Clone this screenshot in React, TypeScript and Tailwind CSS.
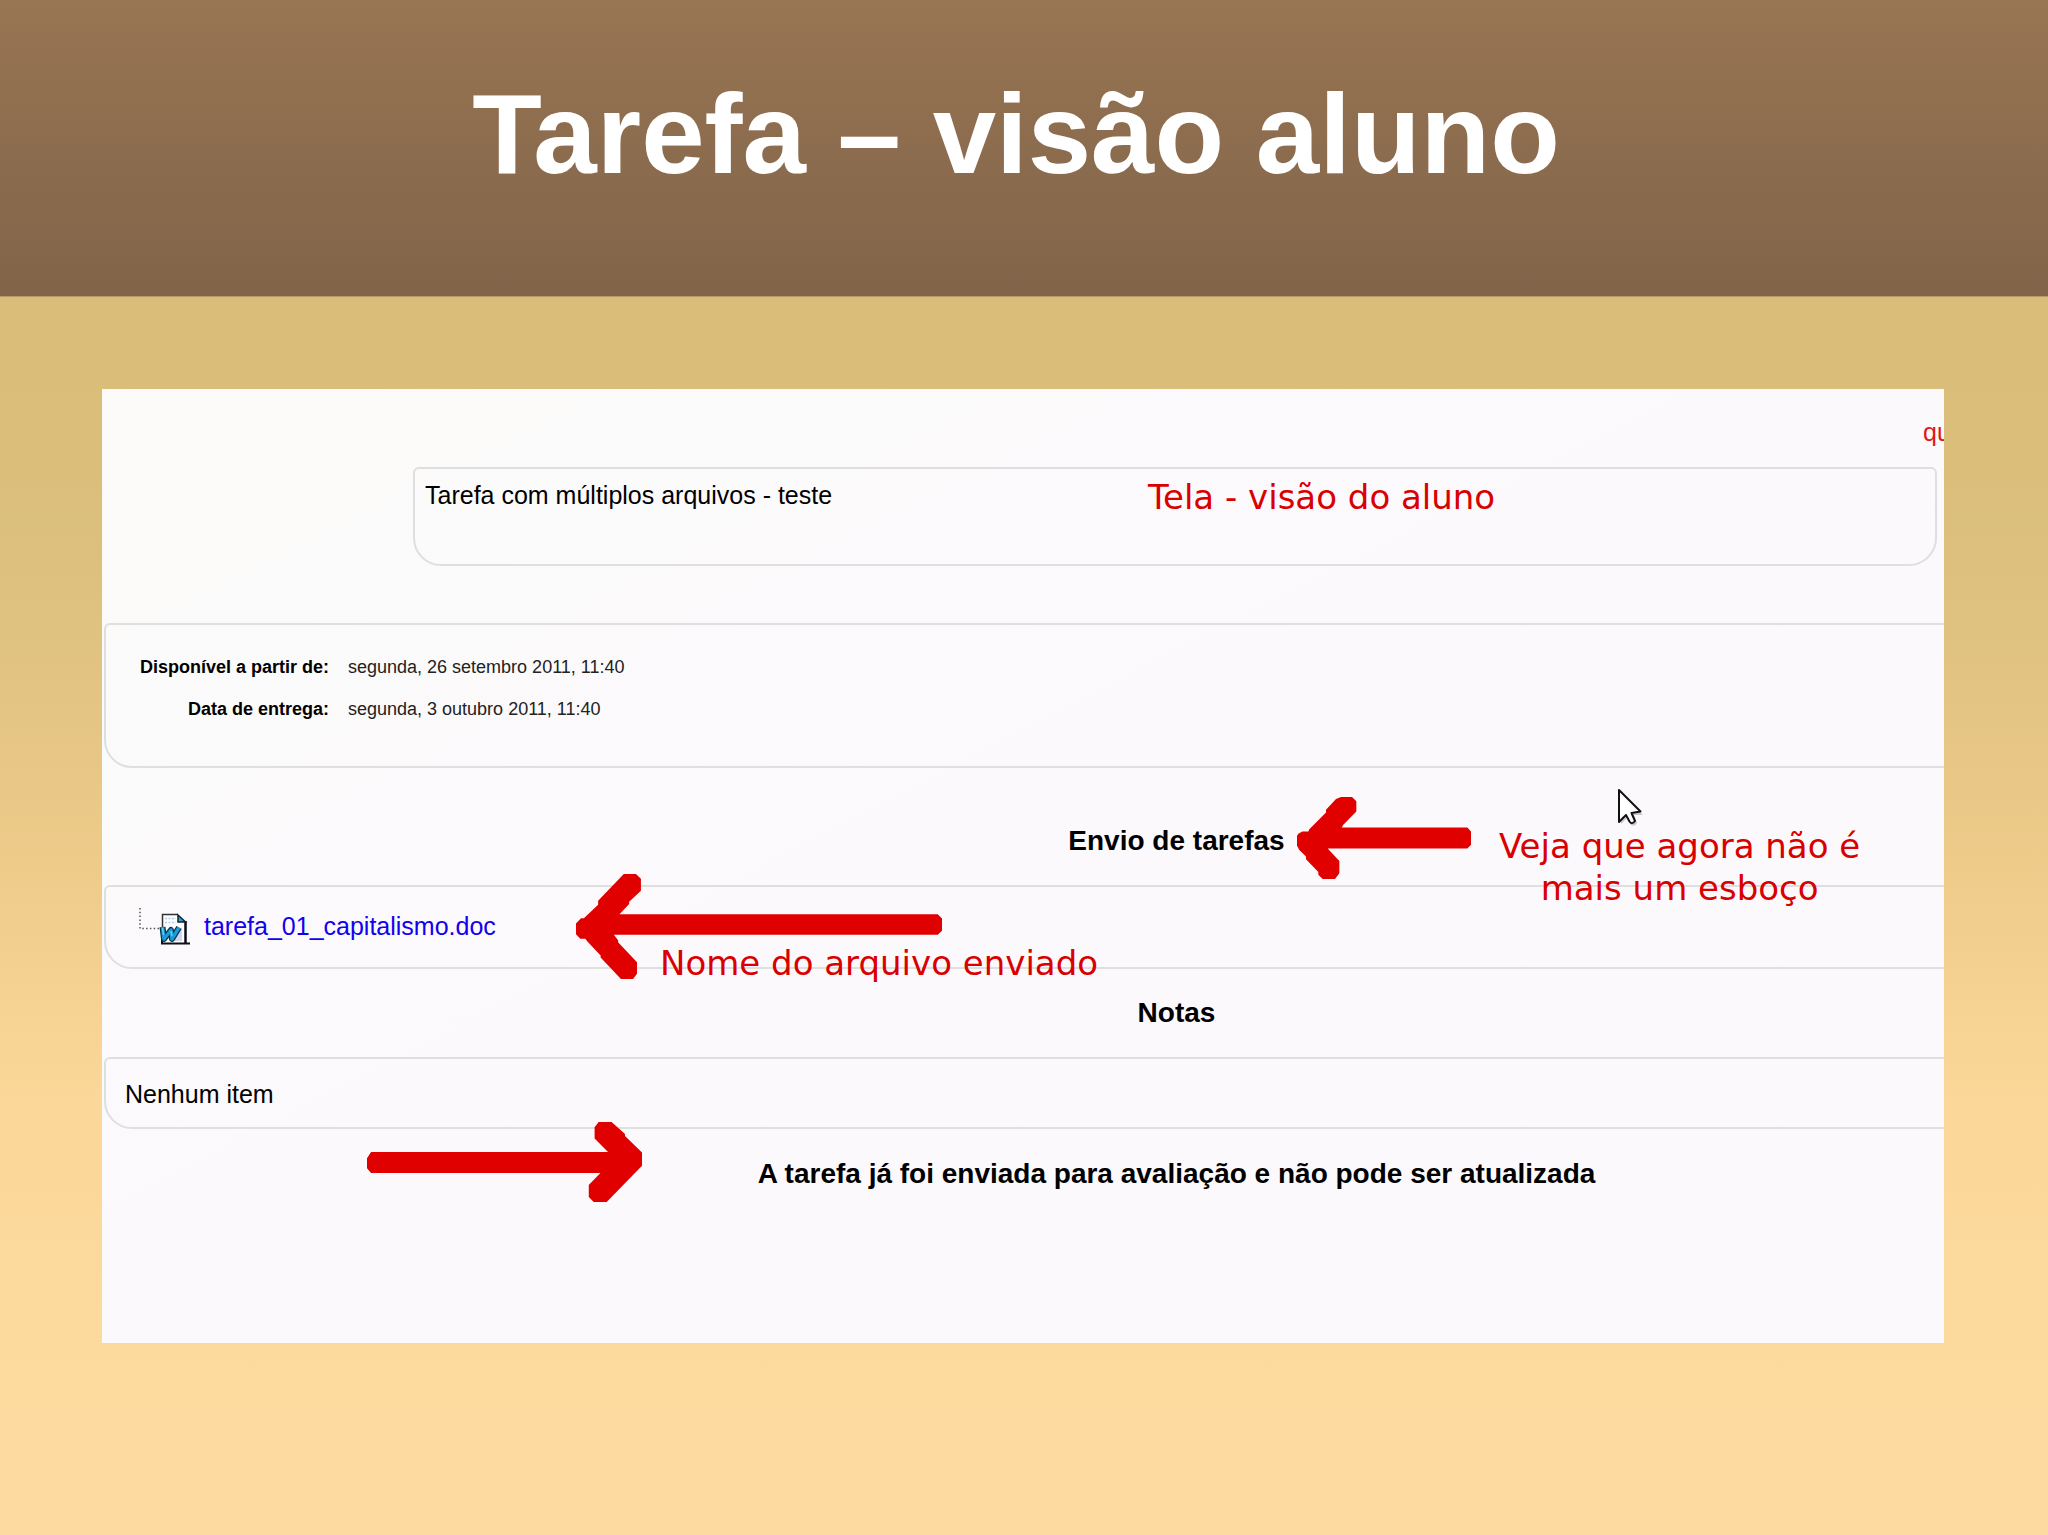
import type { ReactNode } from "react";

function Annotation({ className, children }: { className: string; children: ReactNode }) {
  return (
    <p
      className={`absolute whitespace-nowrap text-center font-['DejaVu_Sans',sans-serif] text-[34px] leading-[42px] text-[#d90000] ${className}`}
    >
      {children}
    </p>
  );
}

function Heading({ children }: { children: ReactNode }) {
  return <h2 className="text-center text-[28px] font-bold leading-[36px]">{children}</h2>;
}

function Box({ className, children }: { className: string; children: ReactNode }) {
  return (
    <section
      className={`rounded-t-md rounded-b-[28px] border-2 border-[#dfdfdf] ${className}`}
    >
      {children}
    </section>
  );
}

function WordIcon() {
  return (
    <svg className="h-[40px] w-[54px] shrink-0" viewBox="0 0 54 40" fill="none" aria-hidden="true">
      <path d="M2 1V21.500H22" stroke="#555" strokeWidth="1.5" strokeDasharray="1.5 2.3" />
      <path d="M24 7H41L47 14V36H24Z" fill="#fdfdff" />
      <path d="M24.500 20V7.500H40" stroke="#333" strokeWidth="1.5" />
      <path d="M24 30V36.500H52" stroke="#111" strokeWidth="2" />
      <path d="M47.500 14V36" stroke="#0b0b18" strokeWidth="2.500" />
      <path d="M40 8L47.500 15H40Z" fill="#2fa7c4" stroke="#123" strokeWidth="1.500" />
      <path d="M27 11.500H38M27 15.500H38" stroke="#b4cdea" strokeWidth="1.500" strokeDasharray="2 1.500" />
      <path d="M34 34L44 20V34Z" fill="#d5d3ef" />
      <path d="M24.500 20L26 32L33 23L34 32L41 20.500" stroke="#062f4a" strokeWidth="6" strokeLinejoin="round" />
      <path d="M24.500 20L26 32L33 23L34 32L41 20.500" stroke="#1b9bd4" strokeWidth="3.500" strokeLinejoin="round" />
      <path d="M24.500 21L25.500 28M33 24L34 29" stroke="#5fd0f4" strokeWidth="1.500" />
    </svg>
  );
}

function Cursor() {
  return (
    <svg
      className="absolute left-[1515px] top-[398px] h-[40px] w-[28px]"
      viewBox="0 0 28 40"
      aria-hidden="true"
    >
      <path d="M4 5V37L10 31L13 37Q17 41 20 36L17 28H26Z" fill="#999" opacity="0.5" />
      <path
        d="M2 3V35L9 28L12.500 34.500Q15 38 18 34L14.500 26L23.500 24.500Z"
        fill="#fff"
        stroke="#111"
        strokeWidth="2"
        strokeLinejoin="round"
      />
    </svg>
  );
}

export default function App() {
  return (
    <div className="flex min-h-screen flex-col bg-[#fddaa0] font-['Liberation_Sans',Arial,sans-serif] text-black">
      <header className="border-b border-[#b89868] bg-gradient-to-b from-[#987553] to-[#816449] pb-[98px] pr-4 pt-[70px]">
        <h1 className="text-center text-[114px] font-bold leading-[128px] text-white">
          Tarefa – visão aluno
        </h1>
      </header>

      <main className="grow bg-[linear-gradient(to_bottom,#d9bd78_0%,#dabe7a_14%,#dfc180_26%,#eecb89_46%,#fbd899_65%,#fddaa0_100%)] pb-48 pl-[102px] pr-[104px] pt-[92px]">
        <div className="relative overflow-hidden bg-gradient-to-br from-[#fcfbf9] via-[#fbf9fc] via-45% to-[#fbf9fc] pb-[151px] pt-[27px] text-[25px] leading-[32px]">
          <div className="flex justify-end text-[#e01818]">
            <p className="w-[21px] overflow-hidden">qu</p>
          </div>

          <div className="ml-[2px] w-[calc(100%+303px)]">
            <Box className="ml-[309px] mr-[312px] mt-[19px] pb-[53px] pl-[10px] pt-[10px]">
              <p>Tarefa com múltiplos arquivos - teste</p>
            </Box>

            <Box className="mb-[55px] mt-[57px] pb-9 pt-[21px]">
              <table className="text-[18px] leading-[42px]">
                <tbody>
                  <tr>
                    <th scope="row" className="w-[223px] p-0 text-right font-bold">
                      Disponível a partir de:
                    </th>
                    <td className="py-0 pl-[19px] text-[#222]">segunda, 26 setembro 2011, 11:40</td>
                  </tr>
                  <tr>
                    <th scope="row" className="w-[223px] p-0 text-right font-bold">
                      Data de entrega:
                    </th>
                    <td className="py-0 pl-[19px] text-[#222]">segunda, 3 outubro 2011, 11:40</td>
                  </tr>
                </tbody>
              </table>
            </Box>

            <Heading>Envio de tarefas</Heading>
            <Box className="my-[26px] flex h-[84px] items-center pl-8">
              <WordIcon />
              <a href="#arquivo" className="ml-3 pb-0.5 text-[#1200ee]">
                tarefa_01_capitalismo.doc
              </a>
            </Box>

            <Heading>Notas</Heading>
            <Box className="mb-[27px] mt-[26px] pb-[17px] pl-[19px] pt-[19px]">
              <p>Nenhum item</p>
            </Box>

            <Heading>A tarefa já foi enviada para avaliação e não pode ser atualizada</Heading>
          </div>

          <Annotation className="left-[1046px] top-[87px]">Tela - visão do aluno</Annotation>
          <Annotation className="left-[1397px] top-[436px]">
            Veja que agora não é<br />
            mais um esboço
          </Annotation>
          <Annotation className="left-[558px] top-[553px]">Nome do arquivo enviado</Annotation>

          <svg
            className="absolute left-[1195px] top-[408px] h-[82px] w-[174px] fill-[#e00000]"
            viewBox="741 82 522 245"
            preserveAspectRatio="none"
            aria-hidden="true"
          >
            <path d="M741 198L745 192L757 185H775L778 178L828 128V120L858 88L873 82H906L919 95V125L880 165L875 173H1252L1263 185V225L1252 236H833L868 273V310L855 327H818L805 314V306L768 268V260L748 240L741 228Z" />
          </svg>
          <svg
            className="absolute left-[474px] top-[485px] h-[105px] w-[366px] fill-[#e00000]"
            viewBox="44 42 1026 314"
            preserveAspectRatio="none"
            aria-hidden="true"
          >
            <path d="M44 190L58 174H66L106 134V122L178 42H212L226 56V92L193 125V132L166 162H1058L1070 175V212L1058 224H150L162 240V246L215 306V340L204 356H170L113 292V286L76 244L70 236H56L44 222Z" />
          </svg>
          <svg
            className="absolute left-[265px] top-[733px] h-[80px] w-[275px] fill-[#e00000]"
            viewBox="61 66 615 241"
            preserveAspectRatio="none"
            aria-hidden="true"
          >
            <path d="M61 175L70 156H600L570 116V82L579 66H608L638 102V108L676 158V198L597 307H568L557 292V256L583 220H70L61 205Z" />
          </svg>
          <Cursor />
        </div>
      </main>
    </div>
  );
}
